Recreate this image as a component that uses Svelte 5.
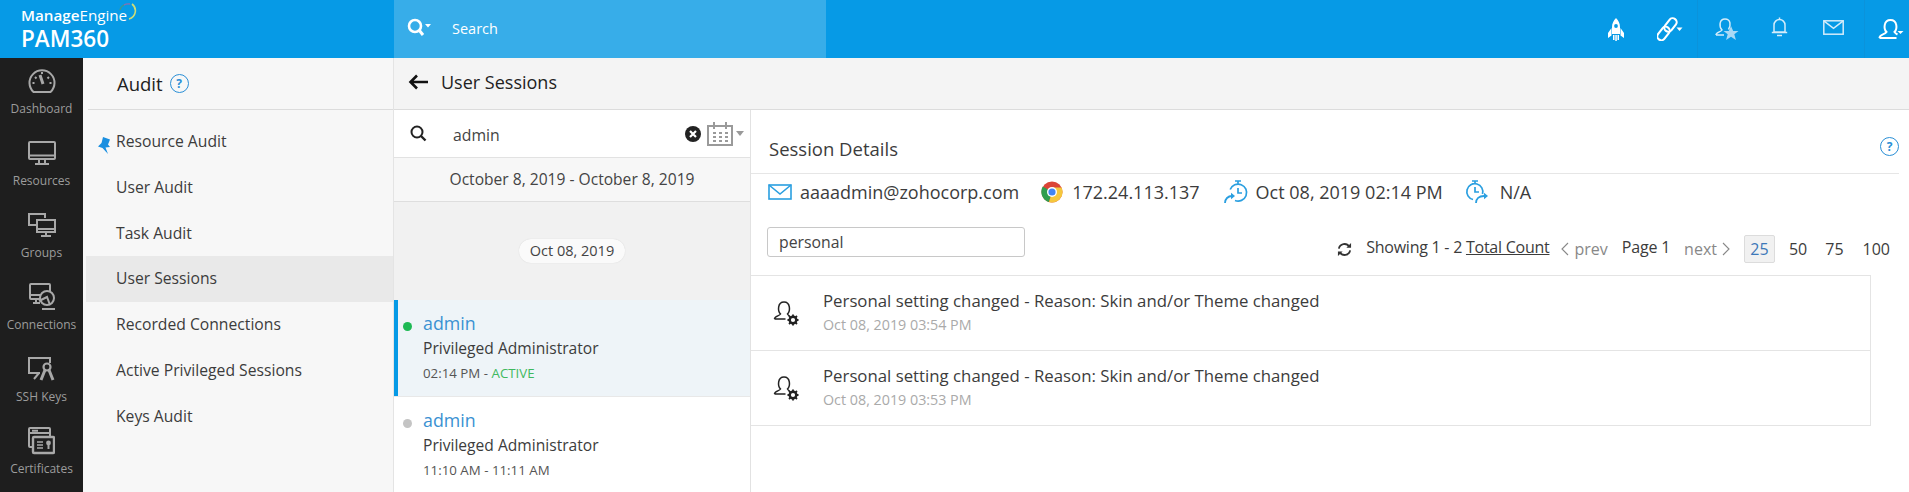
<script>
  const rail = ['Dashboard','Resources','Groups','Connections','SSH Keys','Certificates'];
  const menu = ['Resource Audit','User Audit','Task Audit','User Sessions','Recorded Connections','Active Privileged Sessions','Keys Audit'];
  const logs = ['Oct 08, 2019 03:54 PM','Oct 08, 2019 03:53 PM'];
</script>

<div class="page">
  <header class="top">
    <div class="brand">
      <div class="me"><b>Manage</b>Engine<svg class="arc" viewBox="0 0 18 18" width="18" height="18"><path d="M1 7 A7 7 0 0 1 5 2" fill="none" stroke="#3f9a8c" stroke-width="1.3"/><path d="M5 2 A8 8 0 0 1 11 1" fill="none" stroke="#8a6fb0" stroke-width="1.3"/><path d="M13 1 A8.500 8.500 0 0 1 10 16" fill="none" stroke="#cddc78" stroke-width="1.600"/></svg></div>
      <div class="pam">PAM360</div>
    </div>
    <div class="search">
      <svg width="26" height="20" viewBox="0 0 26 20"><circle cx="8" cy="8" r="6" fill="none" stroke="#fff" stroke-width="2.600"/><path d="M12 12l4 5" stroke="#fff" stroke-width="3"/><path d="M18 6h6l-3 3.500z" fill="#fff"/></svg>
      <span>Search</span>
    </div>
    <div class="icons">
      <svg class="i1" width="16" height="23" viewBox="0 0 16 23"><path d="M8 0c2.500 2.500 4 5.500 4 9v7H4V9c0-3.500 1.500-6.500 4-9z" fill="#fff"/><circle cx="8" cy="8" r="1.900" fill="#069ae6"/><path d="M3.500 10L0 15v5l3.500-2.500zM12.500 10L16 15v5l-3.500-2.500zM5 17h1.500v5H5zM7.300 17h1.500v6H7.300zM9.500 17H11v5H9.500z" fill="#fff"/></svg>
      <svg class="i2" width="26" height="24" viewBox="0 0 26 24" fill="none" stroke="#fff" stroke-width="2.100"><rect x="2.500" y="9" width="8" height="15" rx="4" transform="rotate(38 6.500 16.500)"/><rect x="9.500" y="0.500" width="8" height="15" rx="4" transform="rotate(38 13.500 8)"/><path d="M19.500 10.500h6l-3 3.500z" fill="#fff" stroke="none"/></svg>
      <i class="vsep s1"></i>
      <svg class="i3" width="24" height="24" viewBox="0 0 24 24"><path d="M1 18c0-3 5-3 6-5-3-3-3-11 3-11s6 7 3.500 10.500M1 18h8" fill="none" stroke="#d4ecfa" stroke-width="1.500"/><path d="M16 9l2.200 5h5.300l-4.200 3.300 1.600 5.700-4.900-3.200-4.900 3.200 1.600-5.700-4.200-3.300h5.300z" fill="#a9d9f5"/></svg>
      <svg class="i4" width="17" height="20" viewBox="0 0 17 20" fill="none" stroke="#d4ecfa" stroke-width="1.500"><path d="M3 15V8a5.500 5.500 0 0 1 11 0v7zM.8 15.500h15.400M6 18.500h5M8.500 .5v2"/></svg>
      <svg class="i5" width="21" height="15" viewBox="0 0 21 15" fill="none" stroke="#d4ecfa" stroke-width="1.500"><rect x=".8" y=".8" width="19.400" height="13.400"/><path d="M.8 .8l9.700 7.500 9.700-7.500"/></svg>
      <i class="vsep s2"></i>
      <svg class="i6" width="26" height="22" viewBox="0 0 26 22"><path d="M1.500 20c0-4 5-3 7-6-3-3-3-12 4-12s7 9 4 12c1 1.500 2 2 3 2.500M1.500 20h17" fill="none" stroke="#fff" stroke-width="2"/><path d="M19.500 13h6l-3 3z" fill="#fff"/></svg>
    </div>
  </header>

  <div class="body">
    <nav class="rail">
      {#each rail as r, i}
        <div class="ri">
          <svg width="28" height="28" viewBox="0 0 28 28" fill="none" stroke="#a8a8a8" stroke-width="2">
            {#if i === 0}
              <path d="M5.500 25A12.500 12.500 0 1 1 22.500 25z"/><path d="M12 8l3 9" stroke-width="3"/><path d="M7 10l1.500 1.500M21 10l-1.500 1.500M4.500 16h2M21.500 16h2M14 5v2"/>
            {:else if i === 1}
              <rect x="1" y="3" width="26" height="17" rx="1"/><path d="M1 16.500h26M11 20v4M17 20v4M7 25h14"/>
            {:else if i === 2}
              <path d="M10 14H1V3h16v4"/><rect x="9" y="9" width="18" height="12" fill="#1e1e1e"/><path d="M9 18h18M13 25h10M18 21v4"/>
            {:else if i === 3}
              <rect x="2" y="1" width="20" height="15" rx="1"/><path d="M2 12h12M8 16v4M5 20h7"/><circle cx="19" cy="15" r="7" fill="#1e1e1e"/><path d="M14 26h13M11 18l8-4 3 8"/>
            {:else if i === 4}
              <path d="M23 8V3H2v15h11M7 24l5-6M9 18l-3 0"/><circle cx="20" cy="12" r="3.500" stroke-width="2.200"/><path d="M18 15l-4 10M22 15l4 10" stroke-width="3"/>
            {:else}
              <rect x="2" y="1" width="21" height="19" rx="1"/><path d="M2 6h21M5 3.800h6"/><rect x="6" y="10" width="21" height="16" rx="1" fill="#1e1e1e" stroke-width="2.400"/><path d="M10 15h6M10 18h6M10 21h6" stroke-width="1.600"/><circle cx="21.500" cy="16" r="2.400" fill="#a8a8a8" stroke="none"/><path d="M21.500 17v5" stroke-width="2"/>
            {/if}
          </svg>
          <span>{r}</span>
        </div>
      {/each}
    </nav>

    <aside class="side">
      <div class="side-h"><span>Audit</span><span class="q">?</span></div>
      <ul class="menu">
        {#each menu as m, i}
          <li class:sel={i === 3}>
            {#if i === 0}
              <svg class="pin" width="12" height="17" viewBox="0 0 12 17"><path d="M5 0l7 2.500-2 5 2 2.500-4.500.5L10 17 4.500 11 0 9.500 3.500 6z" fill="#1a8fe0"/></svg>
            {/if}
            {m}
          </li>
        {/each}
      </ul>
    </aside>

    <main class="main">
      <div class="crumb">
        <svg width="20" height="16" viewBox="0 0 20 16" fill="none" stroke="#111" stroke-width="2.600"><path d="M20 8H2.500M9 1.500L2.500 8 9 14.500"/></svg>
        <span>User Sessions</span>
      </div>
      <div class="cols">
        <section class="list">
          <div class="ls">
            <svg width="17" height="17" viewBox="0 0 17 17" fill="none" stroke="#222" stroke-width="2"><circle cx="7" cy="7" r="5.500"/><path d="M11 11l4.500 4.500" stroke-width="2.400"/></svg>
            <span class="q-text">admin</span>
            <svg class="x" width="16" height="16" viewBox="0 0 16 16"><circle cx="8" cy="8" r="8" fill="#222"/><path d="M5 5l6 6M11 5l-6 6" stroke="#fff" stroke-width="2.200"/></svg>
            <svg class="cal" width="26" height="24" viewBox="0 0 26 24" fill="none" stroke="#9a9a9a" stroke-width="2"><rect x="1" y="4" width="24" height="19"/><path d="M7 0v7M19 0v7"/><path d="M6 11h3M12 11h3M18 11h3M6 15h3M12 15h3M18 15h3M6 19h3M12 19h3M18 19h3" stroke-width="2.200"/></svg>
            <svg class="car" width="8" height="5" viewBox="0 0 8 5"><path d="M0 0h8L4 5z" fill="#999"/></svg>
          </div>
          <div class="range">October 8, 2019 - October 8, 2019</div>
          <div class="day"><span>Oct 08, 2019</span></div>
          <div class="sess on">
            <i class="dot green"></i>
            <div class="nm">admin</div>
            <div class="rl">Privileged Administrator</div>
            <div class="tm">02:14 PM - <b>ACTIVE</b></div>
          </div>
          <div class="sess">
            <i class="dot"></i>
            <div class="nm">admin</div>
            <div class="rl">Privileged Administrator</div>
            <div class="tm">11:10 AM - 11:11 AM</div>
          </div>
        </section>

        <section class="det">
          <div class="det-h"><span>Session Details</span><span class="q dq">?</span></div>
          <div class="meta">
            <svg width="24" height="16" viewBox="0 0 24 16" fill="none" stroke="#2a9fe0" stroke-width="1.600"><rect x="1" y="1" width="22" height="14"/><path d="M1 1l11 9 11-9"/></svg>
            <span class="m1">aaaadmin@zohocorp.com</span>
            <svg width="22" height="22" viewBox="0 0 22 22"><circle cx="11" cy="11" r="10.500" fill="#db4437"/><path d="M11 11L1.800 5.500A10.500 10.500 0 0 0 8 21z" fill="#2e9e4f"/><path d="M11 11l-3 10A10.500 10.500 0 0 0 20.500 6.500H11z" fill="#f5c73d"/><circle cx="11" cy="11" r="5" fill="#fff"/><circle cx="11" cy="11" r="3.600" fill="#4285f4"/></svg>
            <span class="m2">172.24.113.137</span>
            <svg width="26" height="24" viewBox="0 0 26 24" fill="none" stroke="#2a9fe0" stroke-width="1.700"><path d="M7.200 9.500A8.500 8.500 0 1 1 12 20.500M12 1h6M15 1v3M15 8v5h4"/><path d="M2 23c0-4 3-7 7-7" stroke-width="1.800"/><path d="M8 12.800l4 3.200-4 3.200z" fill="#2a9fe0" stroke="none"/></svg>
            <span class="m3">Oct 08, 2019 02:14 PM</span>
            <svg width="24" height="24" viewBox="0 0 24 24" fill="none" stroke="#2a9fe0" stroke-width="1.700"><path d="M8 19.500A8 8 0 1 1 17.500 14M7 1h6M10 1v3M10 7v5h4"/><path d="M11 23c0-4 3-7 8-7" stroke-width="1.800"/><path d="M19 12.800l4 3.200-4 3.200z" fill="#2a9fe0" stroke="none"/></svg>
            <span class="m4">N/A</span>
          </div>
          <div class="tools">
            <div class="filter">personal</div>
            <div class="pager">
              <svg class="sync" width="15" height="15" viewBox="0 0 16 16" fill="none" stroke="#333" stroke-width="2"><path d="M2 7a6 6 0 0 1 11-2M14 9a6 6 0 0 1-11 2"/><path d="M15 1v5h-5z" fill="#333" stroke="none"/><path d="M1 15v-5h5z" fill="#333" stroke="none"/></svg>
              <span class="show">Showing 1 - 2 <u>Total Count</u></span>
              <span class="mut prev"><svg width="8" height="14" viewBox="0 0 8 14" fill="none" stroke="#888" stroke-width="1.100"><path d="M7 1L1 7l6 6"/></svg>prev</span>
              <span class="pg">Page 1</span>
              <span class="mut next">next<svg width="8" height="14" viewBox="0 0 8 14" fill="none" stroke="#888" stroke-width="1.100"><path d="M1 1l6 6-6 6"/></svg></span>
              <span class="size cur">25</span>
              <span class="size s50">50</span>
              <span class="size s75">75</span>
              <span class="size s100">100</span>
            </div>
          </div>
          <div class="logs">
            {#each logs as l}
              <div class="log">
                <svg width="26" height="27" viewBox="0 0 26 27" fill="none" stroke="#222" stroke-width="1.500"><path d="M1.500 19c0-3 5-3 6-5-3-3-3-12 3.500-12s6.500 9 3.500 12c.5 1 1 1.500 2 2M1.500 19h11"/><circle cx="20" cy="20" r="3.300" stroke-width="2.400"/><path d="M20 14.500v2M20 23.500v2M14.500 20h2M23.500 20h2M16 16l1.500 1.500M24 24l-1.500-1.500M24 16l-1.500 1.500M16 24l1.500-1.500" stroke-width="1.800"/></svg>
                <div class="lb">
                  <div class="lt">Personal setting changed - Reason: Skin and/or Theme changed</div>
                  <div class="ld">{l}</div>
                </div>
              </div>
            {/each}
          </div>
        </section>
      </div>
    </main>
  </div>
</div>

<style>
  :global(body) { margin: 0; background: #fff; font-family: "Open Sans", "Noto Sans", sans-serif; color: #333; }
  .page { width: 1909px; height: 492px; overflow: hidden; display: flex; flex-direction: column; }
  .top { height: 58px; background: #069ae6; display: flex; flex: none; color: #fff; }
  .brand { width: 394px; box-sizing: border-box; padding: 5px 0 0 21px; flex: none; }
  .me { font-size: 15.200px; font-weight: 400; line-height: 20px; position: relative; width: fit-content; }
  .me b { font-weight: 600; }
  .arc { position: absolute; right: -10px; top: -2px; }
  .pam { font-size: 22.500px; font-weight: 600; line-height: 27px; }
  .search { width: 432px; flex: none; background: #37ade9; display: flex; align-items: center; padding: 0 0 2px 13px; box-sizing: border-box; font-size: 14.500px; gap: 19px; }
  .icons { flex: 1; display: flex; align-items: center; padding-left: 782px; min-width: 0; }
  .icons svg { flex: none; }
  .i2 { margin-left: 33px; }
  .i3 { margin-left: 17px; }
  .i4 { margin-left: 32px; margin-top: -5px; }
  .i5 { margin-left: 35px; margin-top: -4px; }
  .i6 { margin-left: 13px; }
  .vsep { width: 1px; height: 58px; background: #0b93db; flex: none; }
  .s1 { margin-left: 14px; }
  .s2 { margin-left: 20px; }

  .body { flex: 1; display: flex; min-height: 0; }
  .rail { width: 83px; background: #1e1e1e; flex: none; display: flex; flex-direction: column; align-items: center; padding-top: 9px; box-sizing: border-box; overflow: hidden; }
  .ri { height: 72px; display: flex; flex-direction: column; align-items: center; color: #9c9c9c; font-size: 12px; flex: none; gap: 5px; }
  .ri span { line-height: 18px; }

  .side { width: 311px; background: #f7f7f7; flex: none; border-right: 1px solid #e4e4e4; box-sizing: border-box; }
  .side-h { height: 52px; box-sizing: border-box; border-bottom: 1px solid #dcdcdc; margin-left: 5px; padding: 0 0 0 29px; display: flex; align-items: center; gap: 7px; font-size: 18.500px; color: #222; }
  .q { width: 17px; height: 17px; border: 1.500px solid #2a8fd6; border-radius: 50%; color: #2a8fd6; font-size: 12px; font-weight: 700; display: inline-flex; align-items: center; justify-content: center; line-height: 1; flex: none; }
  .menu { list-style: none; margin: 0; padding: 9px 0 0 3px; }
  .menu li { height: 45.800px; line-height: 45.800px; padding-left: 30px; font-size: 15.700px; color: #3c3c3c; position: relative; }
  .menu li.sel { background: #e9e9e9; }
  .pin { position: absolute; left: 12px; top: 18px; }

  .main { flex: 1; min-width: 0; display: flex; flex-direction: column; }
  .crumb { height: 52px; flex: none; box-sizing: border-box; background: #f4f4f4; border-bottom: 1px solid #dcdcdc; display: flex; align-items: center; gap: 13px; padding: 0 0 3px 14px; font-size: 18px; color: #222; }
  .cols { flex: 1; display: flex; min-height: 0; }
  .list { width: 357px; flex: none; border-right: 1px solid #e2e2e2; box-sizing: border-box; }
  .ls { height: 48px; box-sizing: border-box; border-bottom: 1px solid #e2e2e2; display: flex; align-items: center; padding-left: 16px; font-size: 15.800px; background: #fff; }
  .q-text { margin-left: 26px; padding-top: 2px; flex: 1; color: #444; }
  .x { margin-right: 6px; }
  .cal { margin-right: 3px; }
  .car { margin-right: 6px; }
  .range { height: 44px; box-sizing: border-box; border-bottom: 1px solid #dedede; background: #f7f7f7; font-size: 15.600px; color: #444; text-align: center; line-height: 42px; }
  .day { height: 98px; background: #f1f1f1; display: flex; justify-content: center; align-items: center; box-sizing: border-box; }
  .day span { background: #fafafa; border-radius: 13px; font-size: 14.500px; color: #444; height: 24px; line-height: 24px; padding: 0 11px; box-shadow: 0 0 1px #ccc; }
  .sess { height: 97px; box-sizing: border-box; padding: 11px 0 0 29px; position: relative; border-bottom: 1px solid #e8e8e8; }
  .sess.on { background: #eef4f8; box-shadow: inset 4px 0 0 #069ae6; }
  .dot { position: absolute; left: 9px; top: 22px; width: 9px; height: 9px; border-radius: 50%; background: #c4c4c4; }
  .dot.green { background: #1db954; }
  .nm { color: #3a91d2; font-size: 17.800px; line-height: 24px; }
  .rl { font-size: 15.600px; line-height: 25px; margin-top: 1px; color: #3c3c3c; }
  .tm { font-size: 13.300px; line-height: 25px; color: #555; }
  .tm b { font-weight: 400; color: #3fb95f; }

  .det { flex: 1; min-width: 0; }
  .det-h { height: 64px; padding: 14px 0 0 18px; box-sizing: border-box; display: flex; justify-content: space-between; align-items: center; font-size: 18.500px; color: #3c3c3c; border-bottom: 1px solid #e6e6e6; margin-right: 10px; }
  .dq { margin-top: -4px; }
  .meta { display: flex; align-items: center; height: 36px; padding-left: 17px; font-size: 18px; color: #3c3c3c; }
  .m1 { margin-left: 8px; margin-right: 22px; }
  .m2 { margin-left: 9px; margin-right: 23px; }
  .m3 { margin-left: 7px; margin-right: 22px; }
  .m4 { margin-left: 11px; }
  .tools { display: flex; justify-content: space-between; align-items: flex-start; height: 54px; padding: 14px 19px 0 16px; box-sizing: border-box; }
  .filter { width: 258px; height: 30px; margin-top: 3px; box-sizing: border-box; border: 1px solid #c8c8c8; border-radius: 3px; padding-left: 11px; line-height: 28px; font-size: 15.800px; color: #444; }
  .pager { display: flex; align-items: center; font-size: 16px; color: #3c3c3c; margin-top: 11px; height: 28px; }
  .sync { margin-right: 14px; }
  .show { letter-spacing: -0.25px; padding-bottom: 4px; }
  .mut { color: #888; display: inline-flex; align-items: center; gap: 5px; }
  .prev { margin-left: 12px; }
  .pg { margin-left: 14px; padding-bottom: 4px; letter-spacing: -0.2px; }
  .next { margin-left: 14px; margin-right: 14px; }
  .size { height: 28px; line-height: 28px; text-align: center; box-sizing: border-box; }
  .s50 { margin-left: 14px; }
  .s75 { margin-left: 18px; }
  .s100 { margin-left: 19px; }
  .size.cur { width: 31px; background: #f1f1f1; border: 1px solid #dcdcdc; color: #3d78b8; border-radius: 2px; line-height: 26px; }
  .logs { margin-top: 11px; width: 1120px; border: 1px solid #e4e4e4; border-left: none; border-bottom: none; box-sizing: border-box; }
  .log { height: 75px; box-sizing: border-box; border-bottom: 1px solid #e4e4e4; display: flex; align-items: center; padding-left: 22px; gap: 24px; }
  .lb { padding-bottom: 2px; }
  .lt { font-size: 16.800px; line-height: 25px; color: #3c3c3c; }
  .ld { font-size: 14.300px; line-height: 23px; color: #aaa; }
</style>
